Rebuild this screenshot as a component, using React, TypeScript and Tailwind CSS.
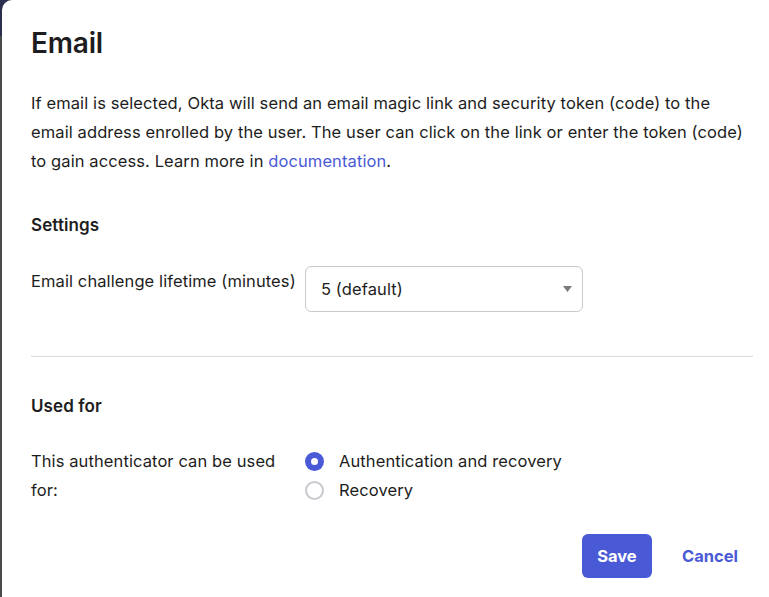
import React from "react";

export default function App() {
  return (
    <div
      className="relative flex h-[597px] w-[769px] overflow-hidden bg-[#4a4a4c]"
      style={{ fontFamily: "Inter, 'Noto Sans', sans-serif" }}
    >
      <div className="absolute left-0 top-0 h-[36px] w-[10px] bg-[#2b2f4f]" />
      <div className="relative ml-[2px] flex-1 rounded-tl-[10px] bg-white pl-[29px] pr-[16px] text-[#1d1d21]">
        <h1 className="mt-[26px] text-[28px] font-semibold leading-[34px] tracking-[-0.2px]">Email</h1>
        <p className="mt-[29px] text-[16.5px] leading-[29px] tracking-[0.1px] text-[#1d1d21]">
          If email is selected, Okta will send an email magic link and security token (code) to the email address
          enrolled by the user. The user can click on the link or enter the token (code) to gain access. Learn more in{" "}
          <span className="text-[#4a5ad6]">documentation</span>.
        </p>

        <h2 className="mt-[37px] text-[17px] font-semibold leading-[24px] tracking-[0.1px]">Settings</h2>
        <div className="mt-[29px] flex items-start">
          <div className="w-[274px] pt-[1px] text-[16.5px] leading-[29px] tracking-[0.1px]">
            Email challenge lifetime (minutes)
          </div>
          <div className="flex h-[46px] w-[278px] items-center justify-between rounded-[6px] border border-[#c9c9cf] pl-[15px] pr-[10px] text-[16.5px] tracking-[0.1px]">
            <span>5 (default)</span>
            <svg width="9" height="6" viewBox="0 0 9 6">
              <path d="M0 0 H9 L4.5 6 Z" fill="#7a7a80" />
            </svg>
          </div>
        </div>

        <div className="mt-[44px] h-px bg-[#dcdcdf]" />

        <h2 className="mt-[37px] text-[17px] font-semibold leading-[24px] tracking-[0.1px]">Used for</h2>
        <div className="mt-[29px] flex items-start">
          <div className="w-[274px] pr-[10px] text-[16.5px] leading-[29px] tracking-[0.1px]">
            This authenticator can be used for:
          </div>
          <div className="flex flex-col text-[16.5px] tracking-[0.1px]">
            <label className="flex h-[29px] items-center gap-[15px]">
              <span className="flex h-[19px] w-[19px] items-center justify-center rounded-full bg-[#4a5ad6]">
                <span className="h-[7px] w-[7px] rounded-full bg-white" />
              </span>
              Authentication and recovery
            </label>
            <label className="flex h-[29px] items-center gap-[15px]">
              <span className="h-[19px] w-[19px] rounded-full border-2 border-[#c9c9cf] bg-white" />
              Recovery
            </label>
          </div>
        </div>

        <div className="mt-[29px] flex items-center justify-end pr-[15px]">
          <button className="h-[44px] w-[70px] rounded-[6px] bg-[#4a5ad6] text-[16.5px] font-bold text-white">
            Save
          </button>
          <button className="ml-[30px] text-[16.5px] font-bold text-[#4a5ad6]">Cancel</button>
        </div>
      </div>
    </div>
  );
}
